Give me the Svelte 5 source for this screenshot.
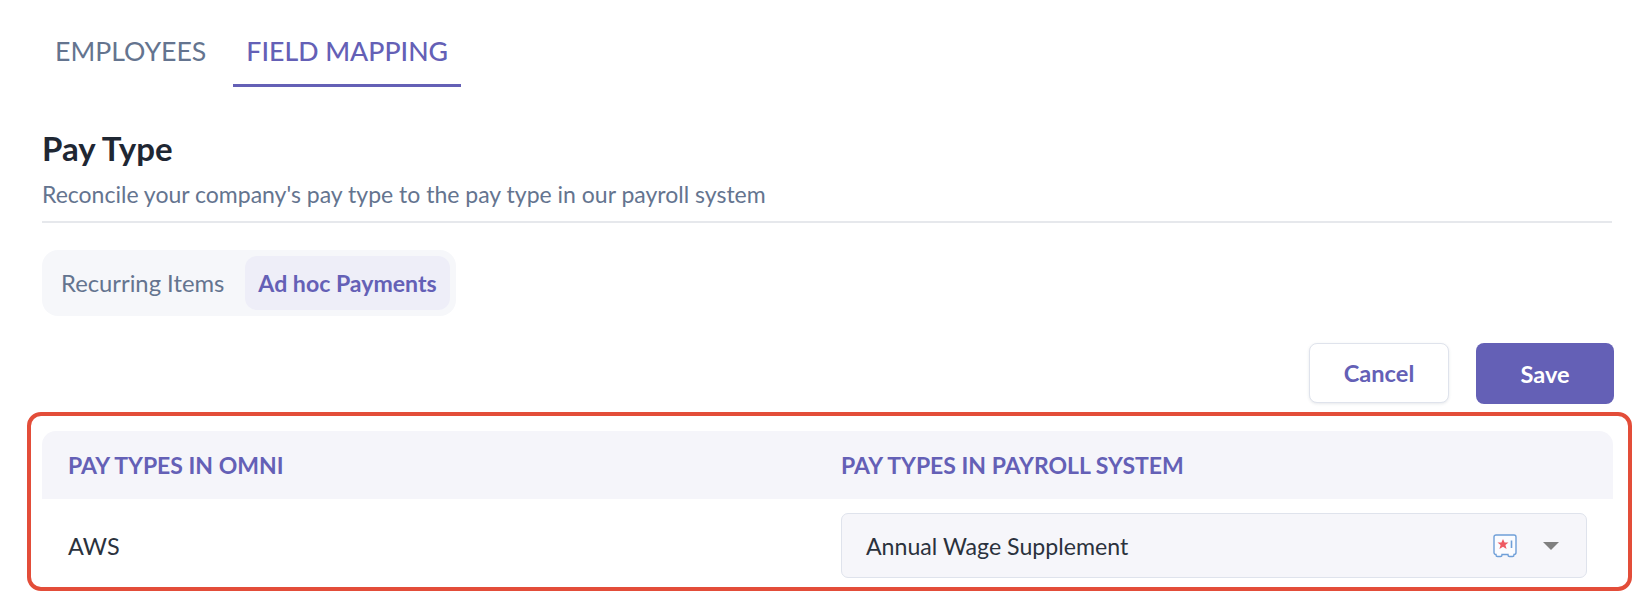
<script lang="ts">
  let tabs = ['EMPLOYEES', 'FIELD MAPPING'];
  let activeTab = $state('FIELD MAPPING');
  let segment = $state('Ad hoc Payments');
</script>

<main class="page">
  <nav class="tabs">
    {#each tabs as tab}
      <button class="tab" class:active={activeTab === tab} onclick={() => (activeTab = tab)}>{tab}</button>
    {/each}
  </nav>

  <header class="heading">
    <h1>Pay Type</h1>
    <p>Reconcile your company's pay type to the pay type in our payroll system</p>
  </header>

  <div class="segments">
    {#each ['Recurring Items', 'Ad hoc Payments'] as item}
      <button class="segment" class:active={segment === item} onclick={() => (segment = item)}>{item}</button>
    {/each}
  </div>

  <div class="actions">
    <button class="btn cancel">Cancel</button>
    <button class="btn save">Save</button>
  </div>

  <section class="highlight">
    <div class="row head">
      <span>PAY TYPES IN OMNI</span>
      <span>PAY TYPES IN PAYROLL SYSTEM</span>
    </div>
    <div class="row body">
      <span>AWS</span>
      <div class="select">
        <span>Annual Wage Supplement</span>
        <svg class="badge" width="24" height="24" viewBox="0 0 24 24" fill="none">
          <path d="M3 1h18a2 2 0 0 1 2 2v15.5a2 2 0 0 1-2 2v.5a1.5 1.5 0 0 1-1.5 1.5h-3a1.5 1.5 0 0 1-1.5-1.5v-.5H9v.5a1.5 1.5 0 0 1-1.5 1.5h-3A1.5 1.5 0 0 1 3 21v-.5a2 2 0 0 1-2-2V3a2 2 0 0 1 2-2z" stroke="#6f9fd8" stroke-width="1.4" fill="#fbfcff" />
          <path d="M10 5l1.6 3.6h3.9l-3.1 2.5 1.2 4-3.6-2.4-3.6 2.4 1.2-4-3.1-2.5h3.9z" fill="#ee5a63" />
          <path d="M18.5 6.5v7.5" stroke="#6f9fd8" stroke-width="1.6" />
        </svg>
        <i class="caret"></i>
      </div>
    </div>
  </section>
</main>

<style>
  :global(body) {
    margin: 0;
    background: #fff;
  }

  .page {
    height: 591px;
    overflow: hidden;
    font-family: Lato, "Liberation Sans", sans-serif;
    box-sizing: border-box;
  }

  button {
    font: inherit;
    background: none;
    border: 0;
    padding: 0;
  }

  .tabs {
    display: flex;
    gap: 14px;
    height: 87px;
    padding-left: 42px;
    box-sizing: border-box;
  }

  .tab {
    height: 87px;
    padding: 17px 13px 0;
    color: #64748f;
    font-size: 26.7px;
    border-bottom: 3px solid transparent;
    box-sizing: border-box;
  }

  .tab.active {
    color: #6460b6;
    font-weight: 500;
    border-bottom-color: #6460b6;
  }

  .heading {
    margin: 38px 20px 0 42px;
    height: 98px;
    border-bottom: 2px solid #e6e8ec;
    box-sizing: border-box;
  }

  h1 {
    margin: 0;
    height: 46px;
    color: #1f2733;
    font-size: 33px;
    font-weight: 700;
    line-height: 46px;
  }

  .heading p {
    margin: 0;
    padding-top: 3px;
    color: #64748f;
    font-size: 23px;
    line-height: 40px;
  }

  .segments {
    display: flex;
    width: fit-content;
    gap: 8px;
    margin: 27px 0 0 42px;
    padding: 6px;
    border-radius: 16px;
    background: #f6f7fa;
  }

  .segment {
    height: 54px;
    padding: 0 13px;
    border-radius: 12px;
    color: #64748f;
    font-size: 23.8px;
  }

  .segment.active {
    color: #6460b6;
    font-weight: 700;
    font-size: 23.1px;
    background: #eeeef8;
  }

  .actions {
    display: flex;
    justify-content: flex-end;
    gap: 27px;
    margin: 27px 18px 0 0;
  }

  .btn {
    height: 60px;
    border-radius: 8px;
    font-size: 23.6px;
    font-weight: 700;
    box-sizing: border-box;
  }

  .cancel {
    width: 140px;
    color: #6460b6;
    background: #fff;
    border: 1.5px solid #dfe3ec;
    box-shadow: 0 1px 3px rgba(60, 70, 100, 0.12);
  }

  .save {
    width: 138px;
    height: 61px;
    color: #fff;
    background: #6460b6;
  }

  .highlight {
    margin: 8px 0 0 27px;
    height: 179px;
    padding: 15px 15px 0 11px;
    border: 4px solid #e34d39;
    border-radius: 14px;
    box-sizing: border-box;
  }

  .row {
    display: grid;
    grid-template-columns: 773px 746px;
    padding-left: 26px;
    align-items: center;
  }

  .head {
    height: 68px;
    border-radius: 14px 14px 0 0;
    background: #f5f5fa;
    color: #6460b6;
    font-size: 23px;
    font-weight: 700;
  }

  .body {
    height: 93px;
    color: #2b323d;
    font-size: 23.4px;
  }

  .select {
    display: flex;
    align-items: center;
    height: 65px;
    padding: 0 27px 0 24px;
    border: 1.5px solid #dfe3ec;
    border-radius: 7px;
    background: #f6f6fa;
    box-sizing: border-box;
    color: #2b323d;
    font-size: 23.15px;
  }

  .select span {
    flex: 1;
  }

  .badge {
    margin-right: 26px;
  }

  .caret {
    width: 0;
    height: 0;
    border-left: 8px solid transparent;
    border-right: 8px solid transparent;
    border-top: 8px solid #808080;
  }
</style>
